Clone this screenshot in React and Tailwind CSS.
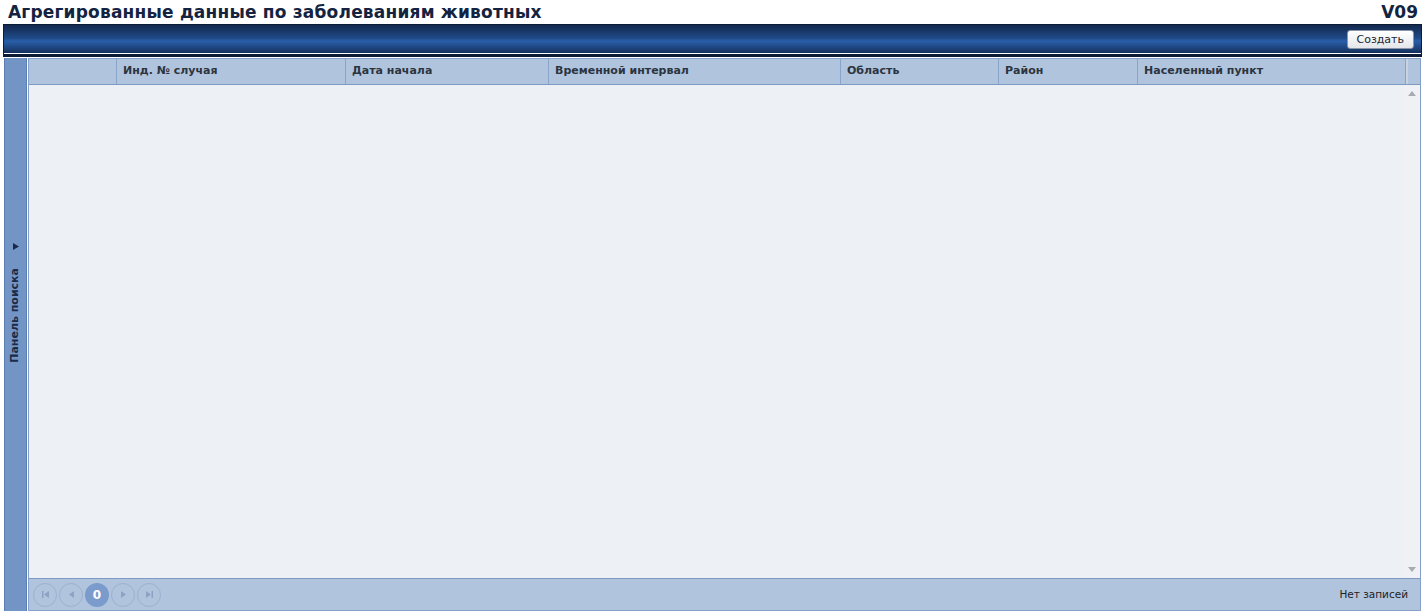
import React from "react";

const cols = [
  { w: 88, t: "" },
  { w: 229, t: "Инд. № случая" },
  { w: 203, t: "Дата начала" },
  { w: 292, t: "Временной интервал" },
  { w: 158, t: "Область" },
  { w: 139, t: "Район" },
  { w: 268, t: "Населенный пункт" },
];

function PagerBtn({ children, active }) {
  return (
    <div
      className={
        active
          ? "w-[24px] h-[24px] rounded-full bg-[#7a9bcb] flex items-center justify-center text-white font-bold text-[12px]"
          : "w-[24px] h-[24px] rounded-full border border-[#9db1d0] flex items-center justify-center text-[#8ea3c4]"
      }
    >
      {children}
    </div>
  );
}

export default function App() {
  return (
    <div className="w-[1425px] h-[613px] bg-white flex flex-col" style={{ fontFamily: '"DejaVu Sans", Verdana, sans-serif' }}>
      <div className="h-[24px] flex items-center justify-between pl-[8px] pr-[7px] text-[#14233f] font-bold leading-none">
        <span className="text-[17px] tracking-[0.2px]">Агрегированные данные по заболеваниям животных</span>
        <span className="text-[17px]">V09</span>
      </div>
      <div className="mx-[3px] h-[33px] border border-[#0c1c36] bg-[linear-gradient(to_bottom,#13294d_0%,#1f4987_45%,#295ea9_55%,#183969_90%,#102448_100%)] border-b-[3px] border-b-[#0c1c36] relative flex items-center justify-end pr-[7px]">
        <div className="absolute left-0 right-0 bottom-0 h-[1px] bg-white" />
        <button className="h-[19px] px-[9px] rounded-[3px] border border-[#8a96a8] bg-[linear-gradient(to_bottom,#ffffff,#e3e6ea)] text-[11px] text-[#1d2533] leading-none mb-[1px]">
          Создать
        </button>
      </div>
      <div className="flex flex-1 mt-[1px] mb-[2px] pl-[4px] pr-[4px]">
        <div className="w-[23px] bg-[#7395c5] border-l border-r border-[#5b7fb2] flex flex-col items-center pt-[185px]">
          <svg width="6" height="7" viewBox="0 0 6 7"><path d="M0 0L6 3.5L0 7z" fill="#1b2b47" /></svg>
          <span className="mt-[18px] text-[#1b2b47] font-bold text-[11px] whitespace-nowrap [writing-mode:vertical-rl] rotate-180">
            Панель поиска
          </span>
        </div>
        <div className="ml-[1px] flex-1 border border-[#86a1c9] flex flex-col bg-[#edf0f5]">
          <div className="h-[26px] bg-[#b0c4de] border-b border-[#7d9ac4] flex">
            {cols.map((c, i) => (
              <div
                key={i}
                style={{ width: c.w }}
                className="h-full border-r border-[#8aa5cc] flex items-center pl-[6px] text-[11px] font-bold text-[#2c3440] whitespace-nowrap"
              >
                {c.t}
              </div>
            ))}
            <div className="flex-1 border-l-[2px] border-[#c9d3e0]" />
          </div>
          <div className="flex-1 flex">
            <div className="flex-1" />
            <div className="w-[16px] bg-[#f0f1f4] flex flex-col items-center justify-between py-[6px]">
              <svg width="8" height="5" viewBox="0 0 8 5"><path d="M4 0L8 5H0z" fill="#a8acb2" /></svg>
              <svg width="8" height="5" viewBox="0 0 8 5"><path d="M0 0H8L4 5z" fill="#a8acb2" /></svg>
            </div>
          </div>
          <div className="h-[32px] bg-[#b0c4de] border-t border-[#7d9ac4] flex items-center justify-between pl-[4px] pr-[12px]">
            <div className="flex items-center gap-[2px]">
              <PagerBtn>
                <svg width="7" height="7" viewBox="0 0 7 7"><path d="M0 0h1.5v7H0zM7 0v7L2 3.5z" fill="#8ea3c4" /></svg>
              </PagerBtn>
              <PagerBtn>
                <svg width="5" height="7" viewBox="0 0 5 7"><path d="M5 0v7L0 3.5z" fill="#8ea3c4" /></svg>
              </PagerBtn>
              <PagerBtn active>0</PagerBtn>
              <PagerBtn>
                <svg width="5" height="7" viewBox="0 0 5 7"><path d="M0 0v7L5 3.5z" fill="#8ea3c4" /></svg>
              </PagerBtn>
              <PagerBtn>
                <svg width="7" height="7" viewBox="0 0 7 7"><path d="M0 0v7L5 3.5zM5.5 0H7v7H5.5z" fill="#8ea3c4" /></svg>
              </PagerBtn>
            </div>
            <span className="text-[10.5px] text-[#222]">Нет записей</span>
          </div>
        </div>
      </div>
    </div>
  );
}
